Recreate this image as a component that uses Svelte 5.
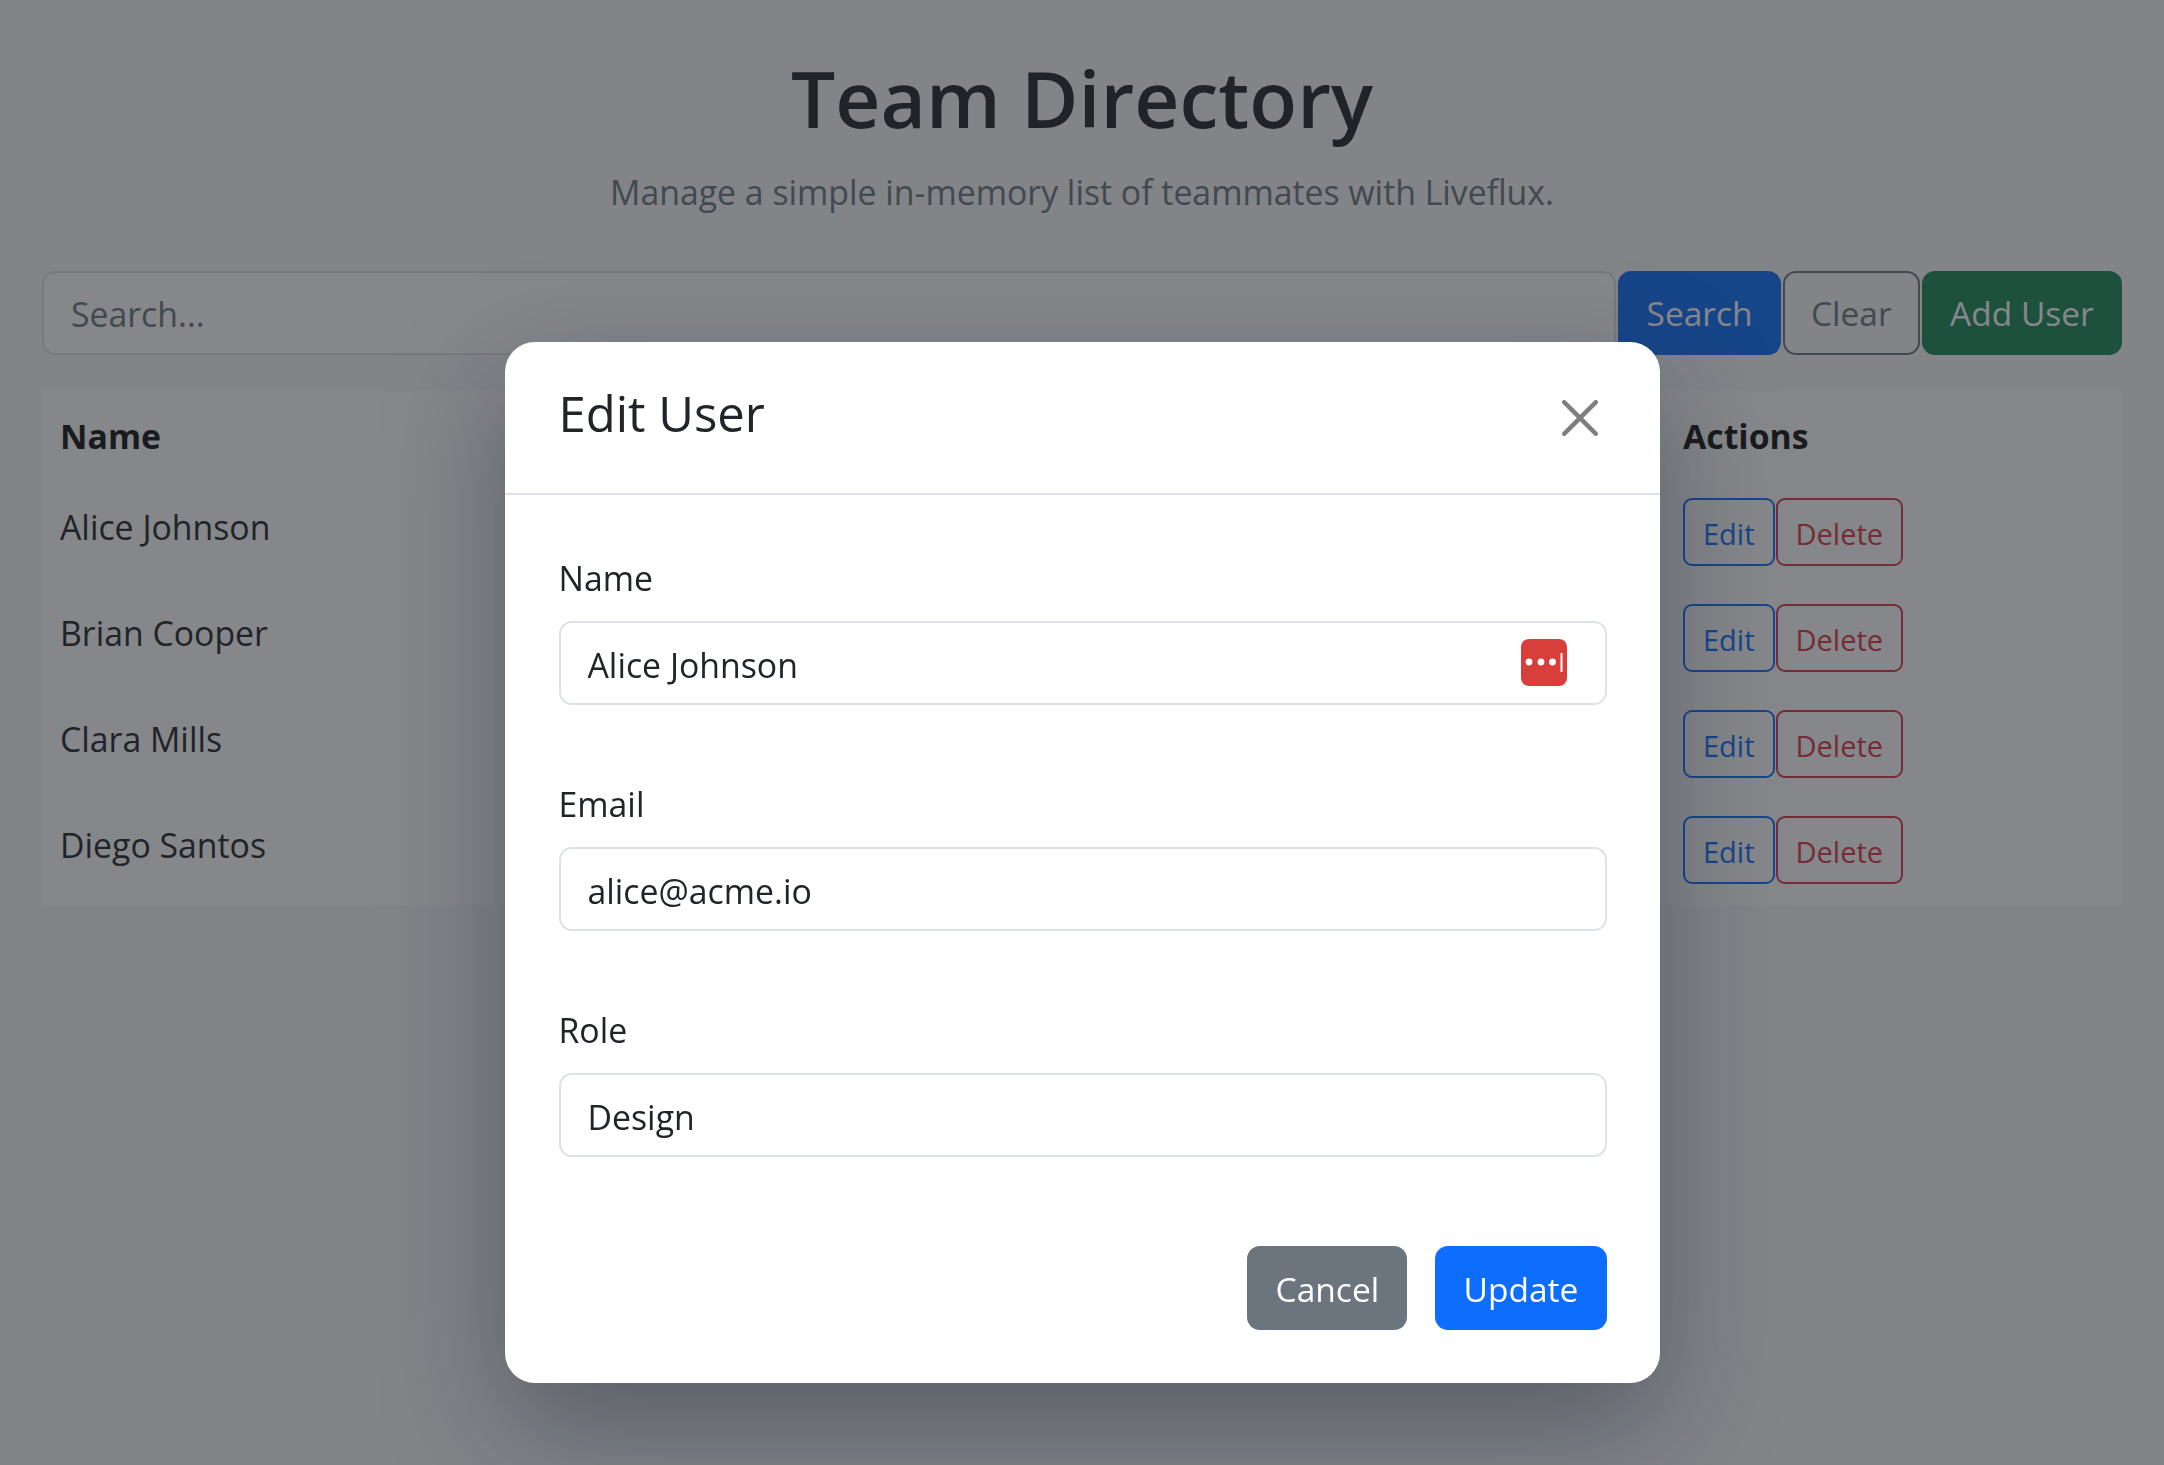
<script lang="ts">
  const people = ["Alice Johnson", "Brian Cooper", "Clara Mills", "Diego Santos"];
  const fields = [
    { label: "Name", value: "Alice Johnson", manager: true },
    { label: "Email", value: "alice@acme.io", manager: false },
    { label: "Role", value: "Design", manager: false },
  ];
</script>

<main class="page">
  <header class="intro">
    <h1>Team Directory</h1>
    <p>Manage a simple in-memory list of teammates with Liveflux.</p>
  </header>

  <div class="toolbar">
    <input class="search" type="text" placeholder="Search..." />
    <button class="btn primary" type="button">Search</button>
    <button class="btn outline" type="button">Clear</button>
    <button class="btn success" type="button">Add User</button>
  </div>

  <table>
    <thead>
      <tr>
        <th>Name</th>
        <th class="actions-col">Actions</th>
      </tr>
    </thead>
    <tbody>
      {#each people as person}
        <tr>
          <td class="person">{person}</td>
          <td>
            <div class="row-actions">
              <button class="mini edit" type="button">Edit</button>
              <button class="mini delete" type="button">Delete</button>
            </div>
          </td>
        </tr>
      {/each}
    </tbody>
  </table>
</main>

<div class="backdrop">
  <section class="modal" aria-label="Edit User">
    <div class="modal-header">
      <h2>Edit User</h2>
      <button class="close" type="button" aria-label="Close">
        <svg viewBox="0 0 16 16" width="36" height="36" aria-hidden="true">
          <path d="M.293.293a1 1 0 0 1 1.414 0L8 6.586 14.293.293a1 1 0 1 1 1.414 1.414L9.414 8l6.293 6.293a1 1 0 0 1-1.414 1.414L8 9.414l-6.293 6.293a1 1 0 0 1-1.414-1.414L6.586 8 .293 1.707a1 1 0 0 1 0-1.414z" />
        </svg>
      </button>
    </div>

    <div class="modal-body">
      {#each fields as field}
        <div class="field">
          <label for={field.label}>{field.label}</label>
          <div class="input-wrap">
            <input id={field.label} type="text" value={field.value} />
            {#if field.manager}
              <svg class="manager" viewBox="0 0 46 47" width="46" height="47" aria-hidden="true">
                <rect width="46" height="47" rx="8" fill="#d93f3a" />
                <circle cx="8" cy="23" r="3.4" fill="#fff" />
                <circle cx="20" cy="23" r="3.4" fill="#fff" />
                <circle cx="31.5" cy="23" r="3.4" fill="#fff" />
                <rect x="39.5" y="14" width="2" height="19" fill="#fff" />
              </svg>
            {/if}
          </div>
        </div>
      {/each}
    </div>

    <div class="modal-footer">
      <button class="btn secondary" type="button">Cancel</button>
      <button class="btn update" type="button">Update</button>
    </div>
  </section>
</div>

<style>
  :global(body) {
    background: #f8f9fa;
    color: #212529;
    font-family: "Open Sans", "Noto Sans", sans-serif;
    font-size: 33.8px;
    line-height: 52.8px;
  }

  .page {
    height: 1465px;
    overflow: hidden;
    box-sizing: border-box;
    padding: 50px 42px 0;
  }

  .intro {
    text-align: center;
    margin-bottom: 52px;
  }

  h1 {
    margin: 0 0 20px;
    font-size: 78.4px;
    line-height: 96px;
    font-weight: 600;
  }

  .intro p {
    margin: 0;
    color: #6c757d;
  }

  .toolbar {
    display: flex;
    gap: 2px;
    margin-bottom: 35px;
  }

  input {
    box-sizing: border-box;
    height: 84px;
    width: 100%;
    padding: 4px 27px 0;
    border: 2px solid #dee2e6;
    border-radius: 13px;
    background: #fff;
    color: #212529;
    font: inherit;
    outline: none;
  }

  .search {
    flex: 1;
    min-width: 0;
    padding-top: 2px;
  }

  .search::placeholder {
    color: #6c757d;
    opacity: 1;
  }

  .btn {
    height: 84px;
    padding: 2px 26.2px 0;
    border: 2px solid transparent;
    border-radius: 13px;
    color: #fff;
    font: inherit;
    font-size: 33.5px;
  }

  .primary,
  .update {
    background: #0d6efd;
  }

  .outline {
    background: transparent;
    border-color: #6c757d;
    color: #6c757d;
  }

  .success {
    background: #198754;
  }

  .secondary {
    background: #6c757d;
  }

  table {
    width: 100%;
    border-collapse: collapse;
    background: #fff;
    table-layout: fixed;
  }

  th,
  td {
    padding: 17px 18px 18px;
    text-align: left;
    vertical-align: top;
  }

  th {
    font-weight: 700;
    color: #111;
    padding: 20px 18px 18px;
  }

  .person {
    padding-top: 20px;
    padding-bottom: 16px;
  }

  .actions-col {
    width: 421px;
  }

  .row-actions {
    display: flex;
    gap: 1px;
    height: 71px;
  }

  .mini {
    height: 68px;
    padding: 5px 18px 0;
    border: 2px solid;
    border-radius: 9px;
    background: transparent;
    font: inherit;
    font-size: 29px;
  }

  .edit {
    color: #0d6efd;
    border-color: #0d6efd;
  }

  .delete {
    color: #dc3545;
    border-color: #dc3545;
  }

  .backdrop {
    position: fixed;
    inset: 0;
    box-sizing: border-box;
    padding-top: 342px;
    display: flex;
    justify-content: center;
    align-items: flex-start;
    background: rgba(33, 37, 41, 0.55);
  }

  .modal {
    width: 1155px;
    height: 1041px;
    box-sizing: border-box;
    display: flex;
    flex-direction: column;
    border-radius: 30px;
    background: #fff;
    box-shadow: 0 44px 120px rgba(15, 23, 42, 0.36);
  }

  .modal-header {
    height: 153px;
    box-sizing: border-box;
    padding: 0 62px 8px 54px;
    display: flex;
    align-items: center;
    justify-content: space-between;
    border-bottom: 2px solid #dee2e6;
  }

  h2 {
    margin: 0;
    font-size: 49px;
    line-height: 63px;
    font-weight: 400;
  }

  .close {
    display: flex;
    padding: 8px 0 0;
    border: none;
    background: none;
    opacity: 0.5;
  }

  .modal-body {
    padding: 56px 53px 0 54px;
    display: flex;
    flex-direction: column;
    gap: 72px;
  }

  label {
    display: block;
    line-height: 55px;
    margin-bottom: 15px;
  }

  .input-wrap {
    position: relative;
  }

  .manager {
    position: absolute;
    top: 18px;
    right: 40px;
  }

  .modal-footer {
    margin-top: auto;
    padding: 0 53px 53px;
    display: flex;
    justify-content: flex-end;
    gap: 28px;
  }
</style>
